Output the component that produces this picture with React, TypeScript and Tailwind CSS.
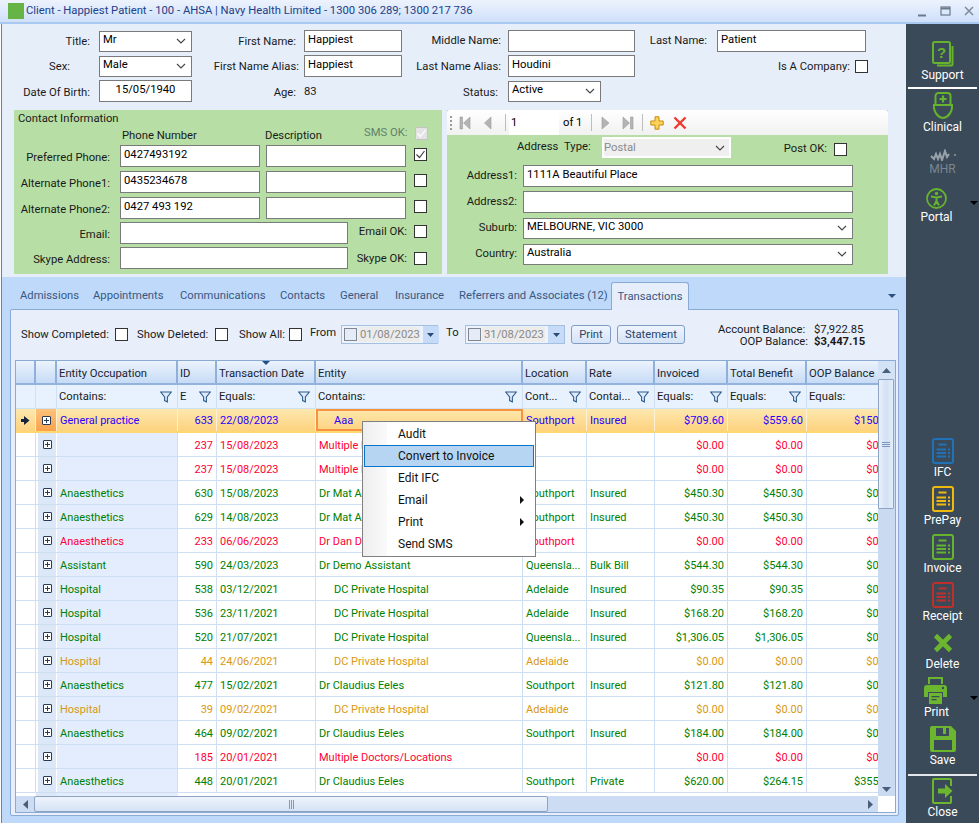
import { FC, ReactNode } from 'react';

const GREEN = 'text-[#008000]';
const RED = 'text-[#ff0033]';
const ORANGE = 'text-[#d9980f]';
const BLUE = 'text-[#2a00ff]';

const COLS = [
  'w-[20px]',
  'w-[21px]',
  'w-[121px]',
  'w-[39px]',
  'w-[99px]',
  'w-[207px]',
  'w-[64px]',
  'w-[68px]',
  'w-[73px]',
  'w-[79px]',
  'w-[91px]',
];

const HEADERS = ['', '', 'Entity Occupation', 'ID', 'Transaction Date', 'Entity', 'Location', 'Rate', 'Invoiced', 'Total Benefit', 'OOP Balance'];
const FILTERS = ['', '', 'Contains:', 'E', 'Equals:', 'Contains:', 'Cont...', 'Contai...', 'Equals:', 'Equals:', 'Equals:'];

type Row = { c: string; v: string[]; indent?: boolean };

const ROWS: Row[] = [
  { c: RED, v: ['', '237', '15/08/2023', 'Multiple Doctors/Locations', '', '', '$0.00', '$0.00', '$0.00'] },
  { c: RED, v: ['', '237', '15/08/2023', 'Multiple Doctors/Locations', '', '', '$0.00', '$0.00', '$0.00'] },
  { c: GREEN, v: ['Anaesthetics', '630', '15/08/2023', 'Dr Mat Anderson', 'Southport', 'Insured', '$450.30', '$450.30', '$0.00'] },
  { c: GREEN, v: ['Anaesthetics', '629', '14/08/2023', 'Dr Mat Anderson', 'Southport', 'Insured', '$450.30', '$450.30', '$0.00'] },
  { c: RED, v: ['Anaesthetics', '233', '06/06/2023', 'Dr Dan Davis', 'Southport', '', '$0.00', '$0.00', '$0.00'] },
  { c: GREEN, v: ['Assistant', '590', '24/03/2023', 'Dr Demo Assistant', 'Queensla...', 'Bulk Bill', '$544.30', '$544.30', '$0.00'] },
  { c: GREEN, indent: true, v: ['Hospital', '538', '03/12/2021', 'DC Private Hospital', 'Adelaide', 'Insured', '$90.35', '$90.35', '$0.00'] },
  { c: GREEN, indent: true, v: ['Hospital', '536', '23/11/2021', 'DC Private Hospital', 'Adelaide', 'Insured', '$168.20', '$168.20', '$0.00'] },
  { c: GREEN, indent: true, v: ['Hospital', '520', '21/07/2021', 'DC Private Hospital', 'Queensla...', 'Insured', '$1,306.05', '$1,306.05', '$0.00'] },
  { c: ORANGE, indent: true, v: ['Hospital', '44', '24/06/2021', 'DC Private Hospital', 'Adelaide', '', '$0.00', '$0.00', '$0.00'] },
  { c: GREEN, v: ['Anaesthetics', '477', '15/02/2021', 'Dr Claudius Eeles', 'Southport', 'Insured', '$121.80', '$121.80', '$0.00'] },
  { c: ORANGE, indent: true, v: ['Hospital', '39', '09/02/2021', 'DC Private Hospital', 'Adelaide', '', '$0.00', '$0.00', '$0.00'] },
  { c: GREEN, v: ['Anaesthetics', '464', '09/02/2021', 'Dr Claudius Eeles', 'Southport', 'Insured', '$184.00', '$184.00', '$0.00'] },
  { c: RED, v: ['', '185', '20/01/2021', 'Multiple Doctors/Locations', '', '', '$0.00', '$0.00', '$0.00'] },
  { c: GREEN, v: ['Anaesthetics', '448', '20/01/2021', 'Dr Claudius Eeles', 'Southport', 'Private', '$620.00', '$264.15', '$355.85'] },
];

const Chevron: FC = () => (
  <svg width="10" height="6" viewBox="0 0 10 6" fill="none" stroke="#444" strokeWidth="1.1"><path d="M1 1l4 4 4-4" /></svg>
);

const Field: FC<{ w: string; children?: ReactNode; center?: boolean }> = ({ w, children, center }) => (
  <div className={`${w} h-[22px] shrink-0 bg-white border border-[#7a7a7a] px-[3px] flex items-center text-black ${center ? 'justify-center' : ''}`}>
    <span className="-mt-[2px]">{children}</span>
  </div>
);

const Select: FC<{ w: string; children?: ReactNode }> = ({ w, children }) => (
  <div className={`${w} h-[21px] shrink-0 bg-white border border-[#7a7a7a] pl-[3px] pr-[5px] flex items-center justify-between text-black`}>
    <span className="-mt-[2px]">{children}</span>
    <Chevron />
  </div>
);

const Check: FC<{ on?: boolean; off?: boolean }> = ({ on, off }) => (
  <div className={`w-[13px] h-[13px] shrink-0 border flex items-center justify-center ${off ? 'border-[#c4c4c4] bg-[#e4e4e4]' : 'border-[#333] bg-white'}`}>
    {on && (
      <svg width="11" height="11" viewBox="0 0 11 11" fill="none" stroke={off ? '#fff' : '#444'} strokeWidth="1.2"><path d="M1.5 5.5l3 3 5-6.5" /></svg>
    )}
  </div>
);

const Lbl: FC<{ w: string; children?: ReactNode; className?: string }> = ({ w, children, className = '' }) => (
  <div className={`${w} shrink-0 text-right whitespace-nowrap ${className}`}>{children}</div>
);

const ContactRow: FC<{ label: string; phone?: string; on?: boolean }> = ({ label, phone, on }) => (
  <div className="flex items-center h-[22px] mb-[4px]">
    <Lbl w="w-[90px]" className="mt-[4px]">{label}</Lbl>
    <div className="w-[10px] shrink-0" />
    <Field w="w-[140px]">{phone}</Field>
    <div className="w-[6px] shrink-0" />
    <Field w="w-[140px]" />
    <div className="w-[8px] shrink-0" />
    <div className="-mt-[3px]"><Check on={on} /></div>
  </div>
);

const ContactWide: FC<{ label: string; ok: string; cb: string }> = ({ label, ok, cb }) => (
  <div className="flex items-center h-[22px] mb-[3px]">
    <Lbl w="w-[90px]" className="mt-[4px]">{label}</Lbl>
    <div className="w-[10px] shrink-0" />
    <Field w="w-[228px]" />
    <Lbl w="w-[59px]" className={cb}>{ok}</Lbl>
    <div className="w-[7px] shrink-0" />
    <div className={cb}><Check /></div>
  </div>
);

const AddrRow: FC<{ label: string; children: ReactNode }> = ({ label, children }) => (
  <div className="flex items-center h-[22px] mb-[4px]">
    <Lbl w="w-[70px]">{label}</Lbl>
    <div className="w-[6px] shrink-0" />
    {children}
  </div>
);

const Tool: FC<{ d: string }> = ({ d }) => (
  <svg width="12" height="14" viewBox="0 0 12 14" className="shrink-0" fill="#b4b4b4" stroke="#9a9a9a" strokeWidth="0.6"><path d={d} /></svg>
);

const Sep: FC = () => <div className="w-px h-[17px] bg-[#bdbdbd] shrink-0" />;

const Toolbar: FC = () => (
  <div className="h-[25px] bg-[linear-gradient(#ffffff,#f1f1f1)] rounded-t-[3px] flex items-center pl-[3px]">
    <div className="w-[2px] h-[14px] border-l-2 border-dotted border-[#9a9a9a] mr-[7px]" />
    <Tool d="M1 1h2.5v12H1zM11 1v12L4.5 7z" />
    <div className="w-[12px]" />
    <Tool d="M8 1v12L1.5 7z" />
    <div className="w-[10px]" />
    <Sep />
    <div className="w-[3px]" />
    <div className="w-[50px] h-[25px] bg-white pl-[2px] flex items-center text-black">1</div>
    <div className="w-[4px]" />
    <div className="w-[24px] text-black">of 1</div>
    <div className="w-[4px]" />
    <Sep />
    <div className="w-[8px]" />
    <Tool d="M2 1v12l7-6z" />
    <div className="w-[10px]" />
    <Tool d="M1 1v12l6.5-6zM8.5 1H11v12H8.5z" />
    <div className="w-[8px]" />
    <Sep />
    <div className="w-[7px]" />
    <svg width="14" height="14" viewBox="0 0 14 14" fill="#fbd25a" stroke="#c98a10" strokeWidth="1"><path d="M5 .8h4V5h4.2v4H9v4.2H5V9H.8V5H5z" /></svg>
    <div className="w-[9px]" />
    <svg width="14" height="14" viewBox="0 0 14 14" fill="none" stroke="#ee3a2c" strokeWidth="2.4"><path d="M1.5 1.5l11 11M12.5 1.5l-11 11" /></svg>
  </div>
);

const DatePick: FC<{ w: string; value: string }> = ({ w, value }) => (
  <div className={`${w} h-[19px] shrink-0 border border-[#a3bfe2] bg-[#eef3fb] flex items-center pl-[1px]`}>
    <div className="w-[13px] h-[13px] border border-[#7d8796] bg-[#e6ecf5] shrink-0 mx-[1px]" />
    <div className="flex-1 h-[15px] bg-[#ececec] text-[#8a8a8a] pl-[2px] flex items-center mr-[3px]">{value}</div>
    <div className="w-[16px] h-[17px] bg-[#c5dbf8] flex items-center justify-center shrink-0">
      <svg width="7" height="4" viewBox="0 0 7 4" fill="#2c4a78"><path d="M0 0h7L3.5 4z" /></svg>
    </div>
  </div>
);

const Btn: FC<{ w: string; children: ReactNode }> = ({ w, children }) => (
  <div className={`${w} h-[19px] shrink-0 rounded-[3px] border border-[#7f9cc4] bg-[linear-gradient(#eef4fd,#d6e4f7)] flex items-center justify-center text-[#2a4568]`}>{children}</div>
);

const Funnel: FC = () => (
  <svg width="12" height="12" viewBox="0 0 12 12" fill="#dfeafa" stroke="#2f5d8c" strokeWidth="1.1" className="shrink-0"><path d="M.7 1h10.6L7.4 6v4.8L4.6 9.600V6z" /></svg>
);

const Expand: FC = () => (
  <div className="w-[9px] h-[9px] border border-[#2b3a55] bg-white rounded-[1px] flex items-center justify-center">
    <svg width="7" height="7" viewBox="0 0 7 7" stroke="#2b3a55" strokeWidth="1"><path d="M3.500 1v5M1 3.500h5" /></svg>
  </div>
);

const GridHeader: FC = () => (
  <div className="flex h-[24px] border-b-2 border-[#93b2dc]">
    {HEADERS.map((h, i) => (
      <div
        key={i}
        className={`${COLS[i]} shrink-0 relative bg-[linear-gradient(#ecf3fd,#c6dbf6)] border-r-2 border-[#8fb0da] pl-[2px] pt-[3px] flex items-center text-[#1a2433] whitespace-nowrap overflow-hidden`}
      >
        {i === 4 && <div className="absolute top-0 left-[45px] w-0 h-0 border-x-[4px] border-x-transparent border-t-[4px] border-t-[#1f4f86]" />}
        {h}
      </div>
    ))}
  </div>
);

const FilterRow: FC = () => (
  <div className="flex h-[24px] bg-[#e8f2fe] border-b border-[#cfe0f3]">
    {FILTERS.map((f, i) => (
      <div key={i} className={`${COLS[i]} shrink-0 border-r border-[#cfe0f3] pl-[2px] pr-[5px] flex items-center justify-between text-[#1a1a1a] whitespace-nowrap overflow-hidden`}>
        <span className="mt-[1px]">{f}</span>
        {i > 1 && i < 10 && <Funnel />}
      </div>
    ))}
  </div>
);

const ActiveRow: FC = () => {
  const v = ['General practice', '633', '22/08/2023', 'Aaa', 'Southport', 'Insured', '$709.60', '$559.60', '$150.00'];
  return (
    <div className={`flex h-[24px] bg-[linear-gradient(#fde8ae,#fdd27f)] border-b-2 border-[#ffd771] text-[11px] ${BLUE}`}>
      <div className={`${COLS[0]} shrink-0 border-r border-[#fdf3d4] flex items-center justify-center`}>
        <svg width="9" height="9" viewBox="0 0 9 9" fill="#14233e"><path d="M0 3h3V0l5.5 4.5L3 9V6H0z" /></svg>
      </div>
      <div className={`${COLS[1]} shrink-0 border-r border-[#fdf3d4] flex items-center justify-center bg-[linear-gradient(#fcc27a,#fba24b)]`}>
        <Expand />
      </div>
      {v.map((t, i) => (
        <div
          key={i}
          className={`${COLS[i + 2]} shrink-0 flex items-center whitespace-nowrap overflow-hidden pt-[2px] ${i === 3 ? 'border-2 border-[#f7933e] pl-[16px]' : 'border-r border-[#fdf3d4] pl-[3px]'} ${i === 1 || i >= 6 ? 'justify-end pr-[3px]' : ''}`}
        >
          {t}
        </div>
      ))}
    </div>
  );
};

const DataRow: FC<{ row: Row }> = ({ row }) => (
  <div className={`flex h-[24px] bg-white border-b border-[#cfdff3] text-[11px] ${row.c}`}>
    <div className={`${COLS[0]} shrink-0 border-r border-[#cfdff3]`} />
    <div className={`${COLS[1]} shrink-0 bg-[#dce8f8] border-r border-white border-l-2 flex items-center justify-center`}>
      <Expand />
    </div>
    {row.v.map((t, i) => (
      <div
        key={i}
        className={`${COLS[i + 2]} shrink-0 border-r border-[#cfdff3] flex items-center whitespace-nowrap overflow-hidden pt-[2px] ${i === 0 ? 'bg-[#e3edfd]' : ''} ${i === 1 || i >= 6 ? 'justify-end pr-[3px]' : 'pl-[3px]'} ${i === 3 && row.indent ? 'pl-[18px]' : ''}`}
      >
        {t}
      </div>
    ))}
  </div>
);

const VScroll: FC = () => (
  <div className="w-[17px] shrink-0 bg-[#c9daf1] flex flex-col h-[435px]">
    <div className="h-[18px] bg-[#d4e2f5] flex items-center justify-center">
      <svg width="9" height="5" viewBox="0 0 9 5" fill="#4a5f7c"><path d="M4.5 0L9 5H0z" /></svg>
    </div>
    <div className="h-[130px] w-[16px] border border-[#8fa4c1] rounded-[1px] bg-[linear-gradient(90deg,#e9f0fb,#d3e1f5_50%,#e3ecf9)] flex items-center justify-center">
      <div className="w-[8px] h-[5px] border-y border-[#7d97bc] flex items-center"><div className="w-full h-px bg-[#7d97bc]" /></div>
    </div>
    <div className="flex-1" />
    <div className="h-[14px] flex items-center justify-center">
      <svg width="9" height="5" viewBox="0 0 9 5" fill="#4a5f7c"><path d="M0 0h9L4.5 5z" /></svg>
    </div>
  </div>
);

const HScroll: FC = () => (
  <div className="h-[16px] flex">
    <div className="w-[862px] bg-[#ccddf3] flex items-center">
      <div className="w-[18px] flex justify-center">
        <svg width="5" height="9" viewBox="0 0 5 9" fill="#4a5f7c"><path d="M5 0v9L0 4.500z" /></svg>
      </div>
      <div className="w-[514px] h-[16px] border border-[#8fa4c1] rounded-[2px] bg-[linear-gradient(#eef4fc,#d4e2f5)] flex items-center justify-center">
        <div className="w-[5px] h-[9px] border-x border-[#8099bc] flex justify-center"><div className="w-px h-full bg-[#8099bc]" /></div>
      </div>
      <div className="flex-1" />
      <div className="w-[16px] flex justify-center">
        <svg width="5" height="9" viewBox="0 0 5 9" fill="#4a5f7c"><path d="M0 0v9l5-4.500z" /></svg>
      </div>
    </div>
    <div className="w-[17px] bg-white" />
  </div>
);

const MenuItem: FC<{ label: string; hot?: boolean; sub?: boolean }> = ({ label, hot, sub }) => (
  <div className={`h-[22px] mx-[1px] relative flex items-center justify-between pl-[33px] pr-[9px] text-[#111] border ${hot ? 'bg-[#b5d5f2] border-[#0c74c9]' : 'border-transparent'}`}>
    {label}
    {sub && <svg width="4" height="8" viewBox="0 0 4 8" fill="#111"><path d="M0 0v8l4-4z" /></svg>}
  </div>
);

const ContextMenu: FC = () => (
  <div className="absolute left-[362px] top-[421px] w-[174px] h-[136px] bg-white border border-[#808080] pt-[1px] z-10 text-[12px]">
    <div className="absolute left-0 top-0 bottom-0 w-[24px] bg-[linear-gradient(90deg,#eeeeee,#fafafa)]" />
    <MenuItem label="Audit" />
    <MenuItem label="Convert to Invoice" hot />
    <MenuItem label="Edit IFC" />
    <MenuItem label="Email" sub />
    <MenuItem label="Print" sub />
    <MenuItem label="Send SMS" />
  </div>
);

const DocIcon: FC<{ color: string }> = ({ color }) => (
  <svg width="22" height="26" viewBox="0 0 22 26" fill="none" stroke={color} strokeWidth="2">
    <rect x="1" y="1" width="20" height="24" rx="2" />
    <path d="M6.500 6.500h8M4.500 11.500h9.500M4.500 15h9.500M4.500 18.500h9.500M16 11.500h2M16 15h2M16 18.500h2" strokeWidth="1.800" />
  </svg>
);

const SupportIcon: FC = () => (
  <svg width="22" height="26" viewBox="0 0 22 26" fill="none" stroke="#66b32e" strokeWidth="2">
    <rect x="1" y="1" width="17" height="21" rx="1.500" />
    <path d="M20.500 5v18.500a1 1 0 0 1-1 1H5" />
    <text x="9.500" y="17" textAnchor="middle" fill="#66b32e" stroke="none" fontSize="15" fontWeight="700" fontFamily="Liberation Sans, sans-serif">?</text>
  </svg>
);

const ClinicalIcon: FC = () => (
  <svg width="20" height="27" viewBox="0 0 20 27" fill="none" stroke="#66b32e" strokeWidth="2">
    <path d="M2.500 13V4a3 3 0 0 1 3-3h9a3 3 0 0 1 3 3v9" />
    <path d="M1 13h18c.6 6-3 12-9 13C4 25 .4 19 1 13z" />
    <path d="M10 3.500v7M6.500 7h7" strokeWidth="2.200" />
  </svg>
);

const MhrIcon: FC = () => (
  <svg width="26" height="12" viewBox="0 0 26 12" fill="none" stroke="#9aa3ab" strokeWidth="2">
    <path d="M1 7l3 3 2-5 2 5 2-5 2 6 3-9 2 6 2-3" />
    <circle cx="25" cy="6" r="0.900" fill="#9aa3ab" stroke="none" />
  </svg>
);

const PortalIcon: FC = () => (
  <svg width="21" height="21" viewBox="0 0 21 21" fill="none" stroke="#66b32e" strokeWidth="1.800">
    <circle cx="10.500" cy="10.500" r="9.500" />
    <circle cx="10.500" cy="5.500" r="1.700" fill="#66b32e" stroke="none" />
    <path d="M5 8.500l5.500 1 5.500-1M10.500 9.500v3.500M10.500 13l-2.500 4.500M10.500 13l2.500 4.500" strokeWidth="2" />
  </svg>
);

const DeleteIcon: FC = () => (
  <svg width="20" height="20" viewBox="0 0 20 20" fill="none" stroke="#6cb52f" strokeWidth="4.600" className="mb-[3px]"><path d="M2.500 2.500l15 15M17.500 2.500l-15 15" /></svg>
);

const PrintIcon: FC = () => (
  <svg width="23" height="27" viewBox="0 0 23 27" fill="#6cb52f" className="mr-[3px]">
    <path d="M4 0h15v7h-2V2H6v5H4z" />
    <path d="M3 8h17a3 3 0 0 1 3 3v9h-4v-5H4v5H0v-9a3 3 0 0 1 3-3z" />
    <path d="M5 16h13v11H5zM7.500 19v1.300h8V19zM7.500 22v1.300h5V22z" fillRule="evenodd" />
    <circle cx="19" cy="11" r="1.200" fill="#3a4a58" />
  </svg>
);

const SaveIcon: FC = () => (
  <svg width="26" height="26" viewBox="0 0 26 26" fill="#6cb52f">
    <path fillRule="evenodd" d="M2 0h19l5 5v19a2 2 0 0 1-2 2H2a2 2 0 0 1-2-2V2a2 2 0 0 1 2-2zM6 2v8h13V2h-3v6h-3V2zM4 14v10h18V14z" />
  </svg>
);

const CloseIcon: FC = () => (
  <svg width="21" height="26" viewBox="0 0 21 26" fill="none" stroke="#6cb52f" strokeWidth="2">
    <path d="M19 8V2a1 1 0 0 0-1-1H2a1 1 0 0 0-1 1v22a1 1 0 0 0 1 1h16a1 1 0 0 0 1-1v-6" />
    <path d="M6 10.500h7V6l7.500 7-7.500 7v-4.500H6z" fill="#6cb52f" stroke="none" />
  </svg>
);

const SideBtn: FC<{ label: string; icon: ReactNode; h: string; shift?: boolean; muted?: boolean; menu?: string }> = ({ label, icon, h, shift, muted, menu }) => (
  <div className={`${h} shrink-0 relative flex flex-col items-center justify-end text-[12px] ${shift ? 'pr-[12px]' : ''}`}>
    <div className="flex-1 flex items-end justify-center">{icon}</div>
    <div className={`leading-[16px] pb-[1px] ${muted ? 'text-[#7b8792]' : 'text-white'}`}>{label}</div>
    {menu && <div className={`absolute right-[1px] ${menu} w-0 h-0 border-x-[4px] border-x-transparent border-t-[4px] border-t-black`} />}
  </div>
);

const Sidebar: FC = () => (
  <aside className="w-[73px] shrink-0 bg-[#3a4a58] flex flex-col">
    <div className="h-[14px] shrink-0" />
    <SideBtn h="h-[46px]" label="Support" icon={<SupportIcon />} />
    <div className="h-[2px] mx-[2px] bg-white mt-[3px] mb-[1px] shrink-0" />
    <SideBtn h="h-[46px]" label="Clinical" icon={<ClinicalIcon />} />
    <div className="h-[9px] shrink-0" />
    <SideBtn h="h-[33px]" label="MHR" icon={<MhrIcon />} muted />
    <div className="h-[7px] shrink-0" />
    <SideBtn h="h-[41px]" label="Portal" icon={<PortalIcon />} shift menu="top-[16px]" />
    <div className="flex-1" />
    <SideBtn h="h-[48px]" label="IFC" icon={<DocIcon color="#1f72b8" />} />
    <SideBtn h="h-[48px]" label="PrePay" icon={<DocIcon color="#f0b90f" />} />
    <SideBtn h="h-[48px]" label="Invoice" icon={<DocIcon color="#66b32e" />} />
    <SideBtn h="h-[48px]" label="Receipt" icon={<DocIcon color="#c0302b" />} />
    <SideBtn h="h-[48px]" label="Delete" icon={<DeleteIcon />} />
    <SideBtn h="h-[48px]" label="Print" icon={<PrintIcon />} shift menu="top-[23px]" />
    <SideBtn h="h-[48px]" label="Save" icon={<SaveIcon />} />
    <div className="h-[2px] mx-[2px] bg-[#e4e8ec] mt-[5px] mb-[2px] shrink-0" />
    <SideBtn h="h-[43px]" label="Close" icon={<CloseIcon />} />
    <div className="h-[2px] shrink-0" />
  </aside>
);

const TitleBar: FC = () => (
  <div className="h-[24px] shrink-0 flex items-center pl-[8px] bg-[linear-gradient(#edf3fd,#cfe0fa)] border-b-2 border-[#a9c9f0] text-[#22408a]">
    <div className="w-[16px] h-[16px] bg-[#66b446] mr-[2px] shrink-0" />
    <div className="flex-1 whitespace-nowrap">Client - Happiest Patient - 100 - AHSA | Navy Health Limited - 1300 306 289; 1300 217 736</div>
    <div className="flex items-center gap-[11px] pr-[4px] shrink-0">
      <svg width="12" height="12" viewBox="0 0 12 12" stroke="#6a7a90" strokeWidth="2"><path d="M1 10.500h8" /></svg>
      <svg width="12" height="12" viewBox="0 0 12 12" fill="none" stroke="#6a7a90" strokeWidth="1.200"><rect x="1" y="2" width="9" height="8" /><path d="M1 3.500h9" strokeWidth="2" /></svg>
      <svg width="12" height="12" viewBox="0 0 12 12" stroke="#7d8a9c" strokeWidth="1.500"><path d="M2 2l8 8M10 2l-8 8" /></svg>
    </div>
  </div>
);

const TopForm: FC = () => (
  <div className="grid grid-cols-[97px_93px_112px_98px_106px_127px_82px_149px] grid-rows-[22px_22px_22px] gap-y-[3px] pt-[6px] items-center">
    <Lbl w="w-full" className="pr-[9px] mt-[2px]">Title:</Lbl>
    <Select w="w-[93px]">Mr</Select>
    <Lbl w="w-full" className="pr-[8px] mt-[2px]">First Name:</Lbl>
    <Field w="w-[98px]">Happiest</Field>
    <Lbl w="w-full" className="pr-[7px]">Middle Name:</Lbl>
    <Field w="w-[127px]" />
    <Lbl w="w-full" className="pr-[10px]">Last Name:</Lbl>
    <Field w="w-[149px]">Patient</Field>

    <Lbl w="w-full" className="pr-[29px] mt-[2px]">Sex:</Lbl>
    <Select w="w-[93px]">Male</Select>
    <Lbl w="w-full" className="pr-[5px] mt-[2px]">First Name Alias:</Lbl>
    <Field w="w-[98px]">Happiest</Field>
    <Lbl w="w-full" className="pr-[7px] mt-[2px]">Last Name Alias:</Lbl>
    <Field w="w-[127px]">Houdini</Field>
    <div className="col-span-2 flex items-center justify-end gap-[5px] -mr-[2px] mt-[1px]">
      <span>Is A Company:</span>
      <Check />
    </div>

    <Lbl w="w-full" className="pr-[9px] mt-[3px]">Date Of Birth:</Lbl>
    <Field w="w-[93px]" center>15/05/1940</Field>
    <Lbl w="w-full" className="pr-[8px] mt-[4px]">Age:</Lbl>
    <div className="mt-[2px]">83</div>
    <Lbl w="w-full" className="pr-[10px] mt-[4px]">Status:</Lbl>
    <Select w="w-[93px]">Active</Select>
    <div className="col-span-2" />
  </div>
);

const ContactPanel: FC = () => (
  <div className="w-[428px] h-[164px] bg-[#b7dfa5] shrink-0 pl-[6px]">
    <div className="h-[17px] -ml-[2px] leading-[18px]">Contact Information</div>
    <div className="flex h-[18px] items-center">
      <div className="w-[102px]" />
      <div className="w-[143px]">Phone Number</div>
      <div className="w-[99px]">Description</div>
      <div className="w-[51px] text-[#62806a] -mt-[7px]">SMS OK:</div>
      <div className="-mt-[5px]"><Check on off /></div>
    </div>
    <ContactRow label="Preferred Phone:" phone="0427493192" on />
    <ContactRow label="Alternate Phone1:" phone="0435234678" />
    <ContactRow label="Alternate Phone2:" phone="0427 493 192" />
    <div className="-mt-[1px]"><ContactWide label="Email:" ok="Email OK:" cb="-mt-[3px]" /></div>
    <ContactWide label="Skype Address:" ok="Skype OK:" cb="mt-[1px]" />
  </div>
);

const AddressPanel: FC = () => (
  <div className="w-[441px] h-[164px] bg-[#b7dfa5] shrink-0">
    <Toolbar />
    <div className="flex items-start h-[30px] pt-[2px] pl-[70px]">
      <span className="w-[47px] mt-[3px]">Address</span>
      <span className="w-[38px] mt-[3px]">Type:</span>
      <div className="w-[129px] h-[21px] bg-[#efefef] border-2 border-white flex items-center justify-between pr-[4px] text-[#8a8a8a]">
        Postal
        <Chevron />
      </div>
      <Lbl w="w-[96px]" className="mt-[5px]">Post OK:</Lbl>
      <div className="w-[7px]" />
      <div className="mt-[6px]"><Check /></div>
    </div>
    <AddrRow label="Address1:"><Field w="w-[330px]">1111A Beautiful Place</Field></AddrRow>
    <AddrRow label="Address2:"><Field w="w-[330px]" /></AddrRow>
    <AddrRow label="Suburb:"><Select w="w-[330px]">MELBOURNE, VIC 3000</Select></AddrRow>
    <div className="mt-[1px]">
      <AddrRow label="Country:"><Select w="w-[330px]">Australia</Select></AddrRow>
    </div>
  </div>
);

const TabStrip: FC = () => (
  <div className="h-[32px] flex items-end pl-[18px] shrink-0 text-[#38587f] relative">
    {[
      ['Admissions', 'w-[73px]'],
      ['Appointments', 'w-[87px]'],
      ['Communications', 'w-[100px]'],
      ['Contacts', 'w-[60px]'],
      ['General', 'w-[55px]'],
      ['Insurance', 'w-[64px]'],
      ['Referrers and Associates (12)', 'w-[152px]'],
    ].map(([t, w]) => (
      <div key={t} className={`${w} h-[27px] flex items-center whitespace-nowrap`}>{t}</div>
    ))}
    <div className="w-[78px] h-[28px] -mb-px relative z-[1] bg-[#e6eefb] border border-b-0 border-[#8aa9d4] rounded-t-[3px] flex items-center justify-center">Transactions</div>
    <div className="absolute right-[10px] top-[17px] w-0 h-0 border-x-[4px] border-x-transparent border-t-[4px] border-t-[#2c4f80]" />
  </div>
);

const FilterBar: FC = () => (
  <div className="h-[50px] flex items-start pl-[10px] pt-[15px] text-[#1a1a1a] shrink-0">
    <div className="w-[94px] whitespace-nowrap mt-[3px]">Show Completed:</div>
    <div className="mt-[3px]"><Check /></div>
    <div className="w-[9px]" />
    <div className="w-[78px] whitespace-nowrap mt-[3px]">Show Deleted:</div>
    <div className="mt-[3px]"><Check /></div>
    <div className="w-[11px]" />
    <div className="w-[50px] whitespace-nowrap mt-[3px]">Show All:</div>
    <div className="mt-[3px]"><Check /></div>
    <div className="w-[8px]" />
    <div className="w-[31px] mt-[1px]">From</div>
    <DatePick w="w-[97px]" value="01/08/2023" />
    <div className="w-[8px]" />
    <div className="w-[19px] mt-[1px]">To</div>
    <DatePick w="w-[100px]" value="31/08/2023" />
    <div className="w-[6px]" />
    <Btn w="w-[40px]">Print</Btn>
    <div className="w-[6px]" />
    <Btn w="w-[68px]">Statement</Btn>
    <div className="w-[33px]" />
    <div className="grid grid-cols-[90px_60px] leading-[12px] -mt-[1px]">
      <div className="text-right pr-[6px] whitespace-nowrap">Account Balance:</div>
      <div className="pl-[6px]">$7,922.85</div>
      <div className="text-right whitespace-nowrap">OOP Balance:</div>
      <div className="pl-[6px] font-bold">$3,447.15</div>
    </div>
  </div>
);

const DataGrid: FC = () => (
  <div className="mx-[4px] border border-[#8aa9d4] bg-white w-[881px] shrink-0">
    <div className="flex h-[435px]">
      <div className="w-[862px] h-[435px] overflow-hidden shrink-0">
        <div className="w-[882px]">
          <GridHeader />
          <FilterRow />
          <ActiveRow />
          {ROWS.map((r, i) => <DataRow key={i} row={r} />)}
          <div className="flex h-[24px] bg-white">
            <div className={`${COLS[0]} shrink-0`} />
            <div className={`${COLS[1]} shrink-0 bg-[#dce8f8]`} />
            <div className={`${COLS[2]} shrink-0 bg-[#e3edfd]`} />
          </div>
        </div>
      </div>
      <VScroll />
    </div>
    <HScroll />
  </div>
);

export default function App() {
  return (
    <div className="w-[979px] h-[823px] relative overflow-hidden bg-white flex flex-col font-['Roboto',sans-serif] text-[11.25px] leading-[14px] text-[#1a1a1a]">
      <TitleBar />
      <div className="flex flex-1 min-h-0 pl-[1px]">
        <main className="w-[905px] shrink-0 flex flex-col border-l border-[#6d7f99]">
          <div className="h-[253px] bg-[#e6eefa] shrink-0">
            <TopForm />
            <div className="flex gap-[5px] pl-[12px] mt-[8px]">
              <ContactPanel />
              <AddressPanel />
            </div>
          </div>
          <div className="flex-1 bg-[#bfd9fb] flex flex-col">
            <TabStrip />
            <div className="ml-[8px] w-[889px] h-[507px] border border-[#8aa9d4] rounded-[2px] bg-[#e8effb]">
              <FilterBar />
              <DataGrid />
            </div>
          </div>
        </main>
        <Sidebar />
      </div>
      <ContextMenu />
    </div>
  );
}
